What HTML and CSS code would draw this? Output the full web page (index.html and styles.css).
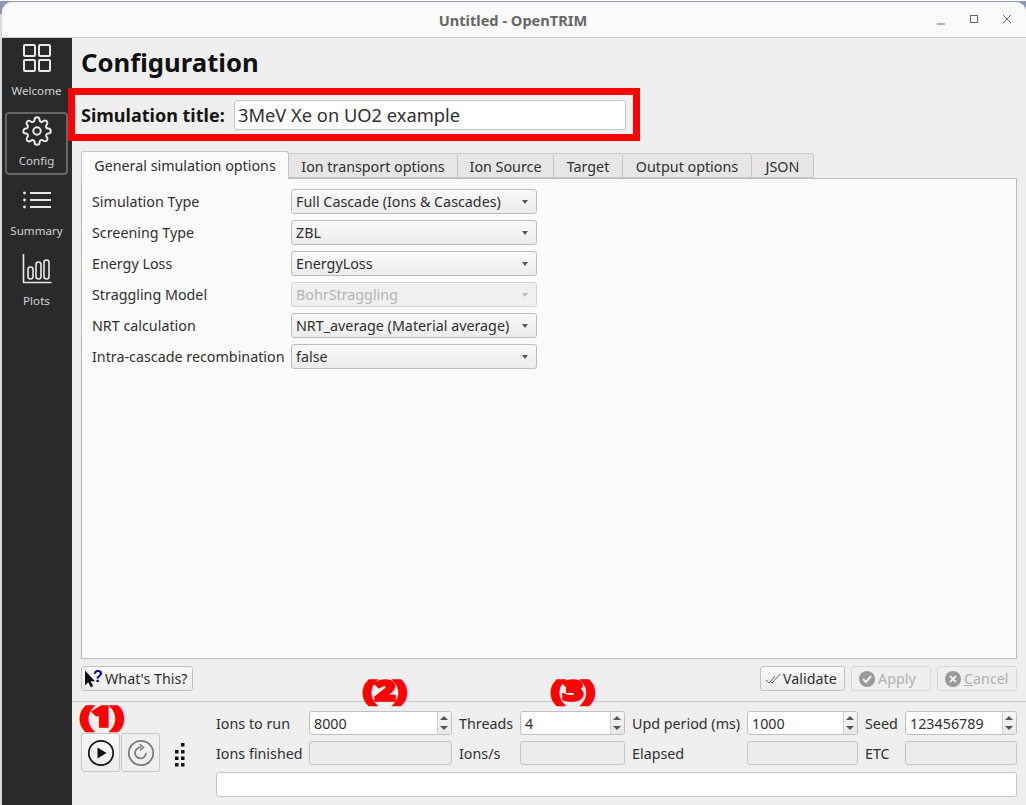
FILE: index.html
```html
<!DOCTYPE html>
<html lang="en">
<head>
  <meta charset="UTF-8">
  <meta name="viewport" content="width=device-width, initial-scale=1.0">
  <link rel="stylesheet" href="styles.css">
  <title>Untitled - OpenTRIM</title>
</head>
<body>

<div class="window">
  <div class="titlebar">
    <span class="window-title">Untitled - OpenTRIM</span>
    <div class="window-btns">
      <svg width="12" height="12" viewBox="0 0 12 12"><path d="M2 11h8" stroke="#666" stroke-width="1" fill="none"/></svg>
      <svg width="12" height="12" viewBox="0 0 12 12"><rect x="2.5" y="2.5" width="7" height="7" stroke="#666" fill="none"/></svg>
      <svg width="12" height="12" viewBox="0 0 12 12"><path d="M2 2l8 8M10 2l-8 8" stroke="#666" fill="none"/></svg>
    </div>
  </div>

  <div class="app">
    <div class="sidebar">
      <div class="side-item">
        <svg class="side-icon up3" width="30" height="30" viewBox="0 0 30 30" fill="none" stroke="#e8e8e8" stroke-width="2">
          <rect x="2" y="2" width="11" height="11" rx="1"/><rect x="17" y="2" width="11" height="11" rx="1"/>
          <rect x="2" y="17" width="11" height="11" rx="1"/><rect x="17" y="17" width="11" height="11" rx="1"/>
        </svg>
        <span>Welcome</span>
      </div>
      <div class="side-item active">
        <svg class="side-icon" width="30" height="30" viewBox="0 0 24 24" fill="none" stroke="#e8e8e8" stroke-width="1.6">
          <circle cx="12" cy="12" r="3"/>
          <path d="M19.4 15a1.65 1.65 0 0 0 .33 1.82l.06.06a2 2 0 0 1 0 2.83 2 2 0 0 1-2.83 0l-.06-.06a1.65 1.65 0 0 0-1.82-.33 1.65 1.65 0 0 0-1 1.51V21a2 2 0 0 1-2 2 2 2 0 0 1-2-2v-.09A1.65 1.65 0 0 0 9 19.4a1.65 1.65 0 0 0-1.82.33l-.06.06a2 2 0 0 1-2.83 0 2 2 0 0 1 0-2.83l.06-.06a1.65 1.65 0 0 0 .33-1.82 1.65 1.65 0 0 0-1.51-1H3a2 2 0 0 1-2-2 2 2 0 0 1 2-2h.09A1.65 1.65 0 0 0 4.6 9a1.65 1.65 0 0 0-.33-1.82l-.06-.06a2 2 0 0 1 0-2.83 2 2 0 0 1 2.83 0l.06.06a1.65 1.65 0 0 0 1.82.33H9a1.65 1.65 0 0 0 1-1.51V3a2 2 0 0 1 2-2 2 2 0 0 1 2 2v.09a1.65 1.65 0 0 0 1 1.51 1.65 1.65 0 0 0 1.82-.33l.06-.06a2 2 0 0 1 2.83 0 2 2 0 0 1 0 2.83l-.06.06a1.65 1.65 0 0 0-.33 1.82V9a1.65 1.65 0 0 0 1.51 1H21a2 2 0 0 1 2 2 2 2 0 0 1-2 2h-.09a1.65 1.65 0 0 0-1.51 1z"/>
        </svg>
        <span>Config</span>
      </div>
      <div class="side-item">
        <svg class="side-icon" width="30" height="30" viewBox="0 0 30 30" fill="none" stroke="#e8e8e8" stroke-width="2">
          <path d="M8 7h21M8 14h21M8 21h21"/>
          <circle cx="2.5" cy="7" r="1.4" fill="#e8e8e8" stroke="none"/><circle cx="2.5" cy="14" r="1.4" fill="#e8e8e8" stroke="none"/><circle cx="2.5" cy="21" r="1.4" fill="#e8e8e8" stroke="none"/>
        </svg>
        <span>Summary</span>
      </div>
      <div class="side-item">
        <svg class="side-icon up2" width="30" height="30" viewBox="0 0 30 30" fill="none" stroke="#e8e8e8" stroke-width="1.6">
          <path d="M1.5 0v28.5h28"/>
          <rect x="6" y="13" width="5" height="12" rx="2.5"/><rect x="14" y="8" width="5" height="17" rx="2.5"/><rect x="22" y="6" width="5" height="19" rx="2.5"/>
        </svg>
        <span>Plots</span>
      </div>
    </div>

    <div class="main">
      <div class="config">
        <h1>Configuration</h1>
        <div class="title-row">
          <label class="title-label">Simulation title:</label>
          <div class="title-input">3MeV Xe on UO2 example</div>
        </div>

        <div class="tabs">
          <div class="tab active w1">General simulation options</div>
          <div class="tab w2">Ion transport options</div>
          <div class="tab w3">Ion Source</div>
          <div class="tab w4">Target</div>
          <div class="tab w5">Output options</div>
          <div class="tab w6">JSON</div>
        </div>
        <div class="panel">
          <div class="form-row"><label>Simulation Type</label><div class="combo">Full Cascade (Ions &amp; Cascades)</div></div>
          <div class="form-row"><label>Screening Type</label><div class="combo">ZBL</div></div>
          <div class="form-row"><label>Energy Loss</label><div class="combo">EnergyLoss</div></div>
          <div class="form-row"><label>Straggling Model</label><div class="combo disabled">BohrStraggling</div></div>
          <div class="form-row"><label>NRT calculation</label><div class="combo">NRT_average (Material average)</div></div>
          <div class="form-row"><label>Intra-cascade recombination</label><div class="combo">false</div></div>
        </div>

        <div class="button-row">
          <button class="btn whats">
            <svg width="19" height="20" viewBox="0 0 19 20"><path d="M1 1.500v15l3.200-3.200 2.600 5 2.400-1.200-2.600-4.800h4.400z" fill="#111"/><text x="9" y="13" class="help-mark">?</text></svg>
            What's This?
          </button>
          <span class="spacer"></span>
          <button class="btn validate">
            <svg width="16" height="12" viewBox="0 0 16 12" fill="none" stroke="#666"><path d="M1 7l3 3 6-7M5 8l2 2 8-9"/></svg>
            Validate
          </button>
          <button class="btn off">
            <svg width="18" height="18" viewBox="0 0 18 18"><circle cx="9" cy="9" r="8" fill="#999"/><path d="M5 9l3 3 5-6" stroke="#eee" stroke-width="2" fill="none"/></svg>
            Apply
          </button>
          <button class="btn off">
            <svg width="18" height="18" viewBox="0 0 18 18"><circle cx="9" cy="9" r="8" fill="#999"/><path d="M6 6l6 6M12 6l-6 6" stroke="#eee" stroke-width="2" fill="none"/></svg>
            <span><u>C</u>ancel</span>
          </button>
        </div>
      </div>

      <div class="runbar">
        <div class="note n1">(1)</div>
        <div class="note n2">(2)</div>
        <div class="note n3">(3)</div>

        <div class="run-controls">
          <button class="run-btn">
            <svg width="28" height="28" viewBox="0 0 28 28"><circle cx="14" cy="14" r="12.2" fill="none" stroke="#111" stroke-width="1.7"/><path d="M10.5 8.5v11l9-5.500z" fill="#111"/></svg>
          </button>
          <button class="run-btn dim">
            <svg width="28" height="28" viewBox="0 0 28 28" fill="none" stroke="#777" stroke-width="1.7"><circle cx="14" cy="14" r="12.2"/><path d="M19 14a5.500 5.500 0 1 1-5-5.500"/><path d="M13 5.500l3.500 3-3.500 3" stroke-width="1.500"/></svg>
          </button>
          <svg class="grip" width="12" height="24" viewBox="0 0 12 24" fill="#111">
            <rect x="7" y="0" width="3.500" height="3.500"/><rect x="1" y="7" width="3.500" height="3.500"/><rect x="7" y="7" width="3.500" height="3.500"/>
            <rect x="1" y="13.500" width="3.500" height="3.500"/><rect x="7" y="13.500" width="3.500" height="3.500"/><rect x="1" y="20" width="3.500" height="3.500"/><rect x="7" y="20" width="3.500" height="3.500"/>
          </svg>
        </div>

        <div class="run-grid">
          <label>Ions to run</label>
          <div class="spin"><span class="spin-val">8000</span><span class="steppers"></span></div>
          <label>Threads</label>
          <div class="spin"><span class="spin-val">4</span><span class="steppers"></span></div>
          <label>Upd period (ms)</label>
          <div class="spin"><span class="spin-val">1000</span><span class="steppers"></span></div>
          <label>Seed</label>
          <div class="spin"><span class="spin-val">123456789</span><span class="steppers"></span></div>

          <label>Ions finished</label>
          <div class="readout"></div>
          <label>Ions/s</label>
          <div class="readout"></div>
          <label>Elapsed</label>
          <div class="readout"></div>
          <label>ETC</label>
          <div class="readout"></div>

          <div class="status"></div>
        </div>
      </div>
    </div>
  </div>
</div>

</body>
</html>
```

FILE: styles.css
```css
* {
  box-sizing: border-box;
}
html, body {
  height: 100%;
}
body {
  margin: 0;
  overflow: hidden;
  background: linear-gradient(#fff 1px, #8d97b3 1px, #8d97b3 14px, #d9dbe0 14px);
  font-family: "Noto Sans", sans-serif;
  font-size: 14.3px;
  color: #2f2f2f;
}
.window {
  height: 803px;
  margin: 2px 0 0 2px;
  border-radius: 10px 10px 0 0;
  overflow: hidden;
  display: flex;
  flex-direction: column;
  background: #efefef;
}
.titlebar {
  height: 36px;
  flex: none;
  background: #fafafa;
  border-bottom: 1px solid #d2d2d2;
  display: flex;
  align-items: center;
  justify-content: center;
  position: relative;
}
.window-title {
  font-size: 14.6px;
  font-weight: 700;
  color: #666;
  margin-right: 2px;
}
.window-btns {
  position: absolute;
  right: 13px;
  top: 11px;
  display: flex;
  gap: 21px;
}
.app {
  flex: 1;
  display: flex;
  min-height: 0;
}

/* left nav */
.sidebar {
  width: 70px;
  flex: none;
  background: #2a2a2a;
  padding: 4px 4px 0 3px;
  display: flex;
  flex-direction: column;
  gap: 7px;
}
.side-item {
  height: 63px;
  display: flex;
  flex-direction: column;
  align-items: center;
  padding-top: 2px;
  gap: 7px;
  color: #cfd3d6;
  font-size: 11.6px;
  border: 2px solid transparent;
  border-radius: 4px;
}
.side-item span {
  line-height: 16px;
}
.side-item.active {
  border-color: #666;
}
.side-icon {
  flex: none;
}
.up3 {
  margin-top: -3px;
  margin-bottom: 3px;
}
.up2 {
  margin-top: -2px;
  margin-bottom: 2px;
}

/* config page */
.main {
  flex: 1;
  min-width: 0;
  display: flex;
  flex-direction: column;
}
.config {
  height: 664px;
  flex: none;
  padding: 0 9px 0 9px;
  border-bottom: 1px solid #c8c8c8;
  display: flex;
  flex-direction: column;
}
h1 {
  margin: 0;
  height: 50px;
  line-height: 50px;
  font-size: 25.700px;
  font-weight: 700;
  color: #111;
}
.title-row {
  width: 572px;
  height: 53px;
  margin-left: -13px;
  flex: none;
  position: relative;
  border: 7px solid #fe0000;
  display: flex;
  align-items: center;
  padding-left: 6px;
}
.title-label {
  width: 153px;
  font-size: 18px;
  font-weight: 700;
  color: #151515;
  white-space: nowrap;
}
.title-input {
  width: 392px;
  height: 30px;
  background: #fff;
  border: 1px solid #c4c4c4;
  border-radius: 3px;
  padding-left: 3px;
  line-height: 28px;
  font-size: 18.300px;
}

/* tabs */
.tabs {
  display: flex;
  align-items: flex-end;
  height: 27px;
  margin-top: 10px;
  flex: none;
  position: relative;
  z-index: 1;
}
.tab {
  height: 25px;
  background: #e6e6e6;
  border: 1px solid #c6c6c6;
  border-left: 0;
  border-radius: 0 3px 0 0;
  text-align: center;
  line-height: 26px;
  white-space: nowrap;
}
.tab.active {
  height: 28px;
  margin-bottom: -1px;
  background: #fbfbfb;
  border-left: 1px solid #c6c6c6;
  border-bottom: 0;
  border-radius: 3px 3px 0 0;
  line-height: 28px;
}
.w1 { width: 208px; }
.w2 { width: 169px; }
.w3 { width: 96px; }
.w4 { width: 69px; }
.w5 { width: 129px; }
.w6 { width: 62px; }
.panel {
  height: 481px;
  flex: none;
  background: #fbfbfb;
  border: 1px solid #bcbcbc;
  padding: 10px 0 0 10px;
  display: flex;
  flex-direction: column;
  gap: 6px;
}
.form-row {
  display: flex;
  align-items: center;
  height: 25px;
}
.form-row label {
  width: 199px;
  flex: none;
  white-space: nowrap;
}
.combo {
  width: 246px;
  height: 25px;
  padding-left: 4px;
  line-height: 23px;
  border: 1px solid #bdbdbd;
  border-radius: 3px;
  background: linear-gradient(#fafafa, #ececec);
  position: relative;
  white-space: nowrap;
}
.combo::after {
  content: "";
  position: absolute;
  right: 8px;
  top: 10px;
  border: 3.500px solid transparent;
  border-top: 4px solid #555;
  border-bottom: 0;
}
.combo.disabled {
  color: #b4b4b4;
  background: #f0f0f0;
  border-color: #d4d4d4;
}
.combo.disabled::after {
  border-top-color: #bbb;
}

/* buttons under the panel */
.button-row {
  display: flex;
  gap: 6px;
  margin-top: 7px;
}
.spacer {
  flex: 1;
}
.btn {
  height: 25px;
  padding: 0;
  display: flex;
  align-items: center;
  gap: 2px;
  font: inherit;
  color: #2f2f2f;
  background: linear-gradient(#fafafa, #ececec);
  border: 1px solid #c0c0c0;
  border-radius: 3px;
}
.whats {
  width: 112px;
  padding-left: 2px;
  gap: 2px;
}
.validate {
  width: 85px;
  padding-left: 4px;
}
.off {
  width: 80px;
  padding-left: 6px;
  color: #b0b0b0;
  border-color: #d8d8d8;
  background: #efefef;
}
.help-mark {
  font-family: "Liberation Sans", sans-serif;
  font-size: 16px;
  font-weight: 700;
  fill: #00008b;
}

/* run bar */
.runbar {
  flex: 1;
  position: relative;
  display: flex;
  padding: 9px 9px 0 9px;
}
.run-controls {
  width: 135px;
  flex: none;
  display: flex;
  align-items: flex-start;
  padding-top: 22px;
  gap: 1px;
}
.run-btn {
  width: 39px;
  height: 39px;
  padding: 0;
  display: flex;
  align-items: center;
  justify-content: center;
  background: linear-gradient(#f8f8f8, #ececec);
  border: 1px solid #c8c8c8;
  border-radius: 3px;
  position: relative;
  z-index: 1;
}
.run-btn.dim {
  background: #efefef;
}
.grip {
  margin: 10px 0 0 13px;
}
.run-grid {
  display: grid;
  grid-template-columns: 86px 143px 54px 105px 108px 111px 33px 112px;
  grid-template-rows: 24px 24px 26px;
  column-gap: 7px;
  row-gap: 6px;
  align-items: center;
  white-space: nowrap;
}
.spin {
  height: 24px;
  display: flex;
  background: #fff;
  border: 1px solid #c0c0c0;
  border-radius: 3px;
  overflow: hidden;
  position: relative;
  z-index: 1;
}
.spin-val {
  flex: 1;
  padding-left: 4px;
  line-height: 23px;
}
.steppers {
  width: 14px;
  flex: none;
  border-left: 1px solid #d0d0d0;
  background: linear-gradient(#f6f6f6, #e8e8e8);
  position: relative;
}
.steppers::before, .steppers::after {
  content: "";
  position: absolute;
  left: 2px;
  border: 4px solid transparent;
}
.steppers::before {
  top: 4px;
  border-top: 0;
  border-bottom: 4px solid #555;
}
.steppers::after {
  bottom: 4px;
  border-bottom: 0;
  border-top: 4px solid #555;
}
.readout {
  height: 24px;
  background: #ececec;
  border: 1px solid #c4c4c4;
  border-radius: 3px;
}
.status {
  grid-column: 1 / -1;
  align-self: end;
  height: 25px;
  background: #fff;
  border: 1px solid #c4c4c4;
  border-radius: 3px;
}

/* red callouts over the run bar */
.note {
  position: absolute;
  width: 50px;
  height: 30px;
  text-align: center;
  color: #fe0000;
  font-weight: 700;
  font-size: 27px;
  line-height: 30px;
  -webkit-text-stroke: 3.500px #fe0000;
  transform: scaleX(1.27);
}
.n1 { left: 5px; top: -1px; }
.n2 { left: 288px; top: -27px; }
.n3 { left: 476px; top: -27px; }
```
